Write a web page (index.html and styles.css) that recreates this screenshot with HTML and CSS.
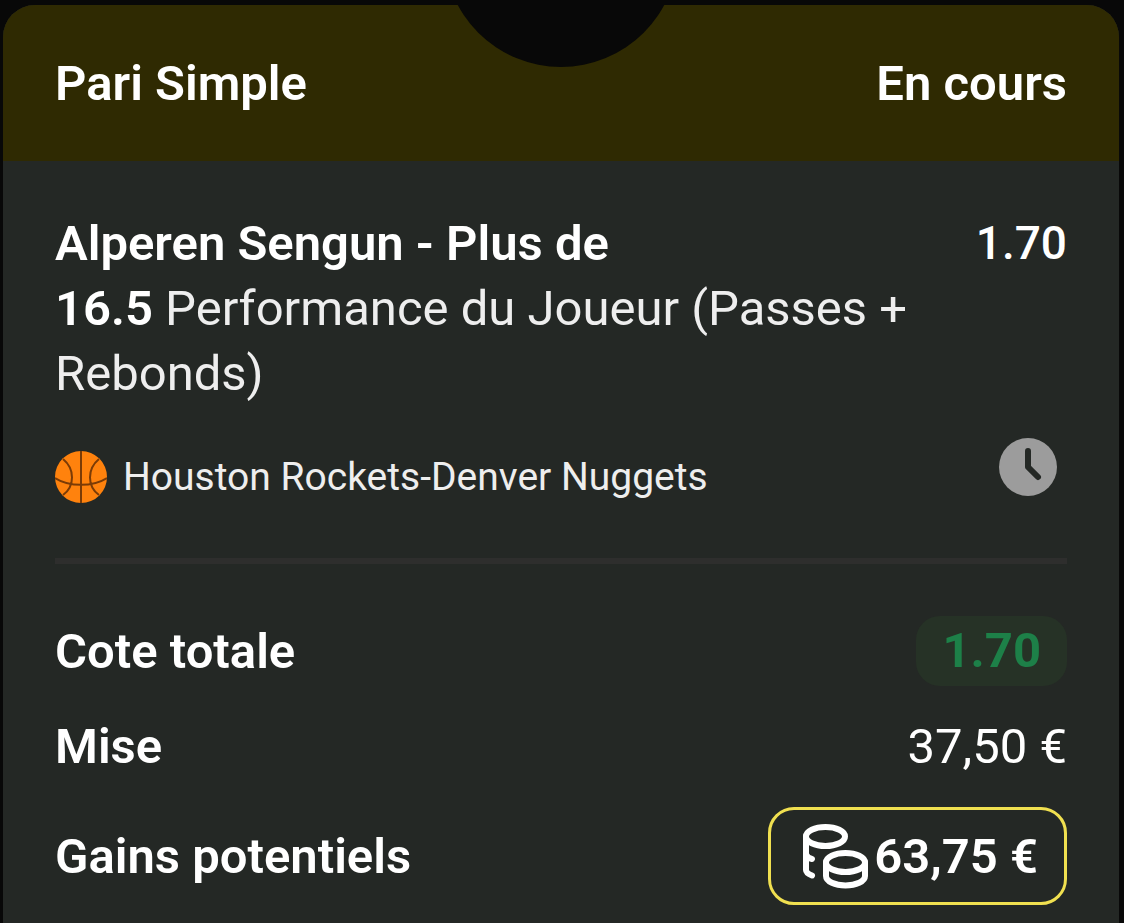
FILE: index.html
```html
<!doctype html>
<html lang="fr">
<head>
    <meta charset="utf-8">
    <meta name="viewport" content="width=device-width, initial-scale=1">

    <title>Pari Simple</title>

    <link rel="stylesheet" href="styles.css">
</head>
<body>
    <main class="ticket">
        <header class="ticket-header">
            <h1>Pari Simple</h1>
            <p class="status">En cours</p>
        </header>

        <section class="bet">
            <div class="selection">
                <h2><strong>Alperen Sengun - Plus de</strong><br><strong>16.5</strong> Performance du Joueur (Passes + Rebonds)</h2>
                <p class="odds">1.70</p>
            </div>

            <div class="match">
                <svg class="ball" viewBox="0 0 52 52" aria-hidden="true">
                    <circle cx="26" cy="26" r="26" fill="#ff820d"/>
                    <path d="M26 0v52M0 27c14 9 38 9 52 0M8 8c12 10 12 27 0 36M44 8c-12 10-12 27 0 36" fill="none" stroke="#7b3b06" stroke-width="2"/>
                </svg>
                <p class="teams">Houston Rockets-Denver Nuggets</p>
                <svg class="clock" viewBox="0 0 58 58" role="img" aria-label="En attente">
                    <circle cx="29" cy="29" r="29" fill="#9c9c9c"/>
                    <path d="M29 13v16l10 10" fill="none" stroke="#242825" stroke-width="6" stroke-linecap="round" stroke-linejoin="round"/>
                </svg>
            </div>
        </section>

        <dl class="summary">
            <div class="row">
                <dt>Cote totale</dt>
                <dd class="total-odds">1.70</dd>
            </div>
            <div class="row">
                <dt>Mise</dt>
                <dd>37,50 €</dd>
            </div>
            <div class="row">
                <dt>Gains potentiels</dt>
                <dd class="winnings">
                    <svg class="coins" viewBox="0 0 65 65" aria-hidden="true">
                        <g fill="none" stroke="#fff" stroke-width="6" stroke-linecap="round">
                            <ellipse cx="22.5" cy="12.5" rx="19.5" ry="9.5"/>
                            <path d="M3 12.5V46q0 3 6 5.5M3 30q1 4 6 5"/>
                            <ellipse cx="42.5" cy="38.5" rx="19.5" ry="9.5"/>
                            <path d="M23 38.5V52c0 5.5 9 9.500 19.5 9.500S62 57.5 62 52V38.5"/>
                        </g>
                    </svg>
                    63,75 €
                </dd>
            </div>
        </dl>
    </main>
</body>
</html>
```
FILE: styles.css
```css
/*
 * Reset
 */

*,
*::before,
*::after {
    box-sizing: border-box;
    margin: 0;
    padding: 0;
}

body {
    background-color: #080808;
    color: #fff;
    font-family: Roboto, sans-serif;
    font-size: 49px;
    line-height: 65px;
    padding: 5px 5px 0 3px;
}

h1,
h2 {
    font-size: 49px;
}

h1,
.status,
strong,
dt {
    font-weight: 600;
}

svg {
    display: block;
    flex: none;
}

/*
 * Ticket
 */

.ticket {
    background-color: #242825;
    border-radius: 32px 32px 0 0;
    min-height: calc(100vh - 5px);
    overflow: hidden;
    position: relative;
}

.ticket-header {
    align-items: center;
    background-color: #2f2a02;
    display: flex;
    justify-content: space-between;
    min-height: 156px;
    padding: 0 52px;
}

/* Round notch cut out of the top edge */
.ticket::before {
    background-color: #080808;
    border-radius: 50%;
    content: "";
    height: 234px;
    left: 50%;
    position: absolute;
    top: -172px;
    transform: translateX(-50%);
    width: 234px;
}

/*
 * Bet
 */

.bet {
    border-bottom: 6px solid #2e2e2d;
    margin: 0 52px;
    padding: 50px 0 55px;
}

.selection {
    display: flex;
    justify-content: space-between;
}

.selection h2 {
    color: #eee;
    font-weight: 400;
    max-width: 870px;
}

.selection strong {
    color: #fff;
}

.odds {
    font-size: 46px;
    font-weight: 500;
}

.match {
    align-items: center;
    display: flex;
    gap: 16px;
    margin-top: 45px;
}

.ball {
    height: 52px;
    width: 52px;
}

.teams {
    color: #eee;
    flex: 1;
    font-size: 39px;
    line-height: 52px;
}

.clock {
    align-self: flex-start;
    height: 58px;
    margin: -13px 10px 0 0;
    width: 58px;
}

/*
 * Summary
 */

.summary {
    display: flex;
    flex-direction: column;
    gap: 28px;
    padding: 52px 52px 18px;
}

.row {
    align-items: center;
    display: flex;
    justify-content: space-between;
}

.total-odds {
    background-color: #263226;
    border-radius: 24px;
    color: #1d8048;
    font-weight: 700;
    line-height: 70px;
    padding: 0 26px;
}

.winnings {
    align-items: center;
    border: 3px solid #f0e050;
    border-radius: 26px;
    display: flex;
    font-weight: 600;
    gap: 6px;
    height: 98px;
    padding: 0 26px 0 32px;
}

.coins {
    height: 65px;
    width: 65px;
}
```
